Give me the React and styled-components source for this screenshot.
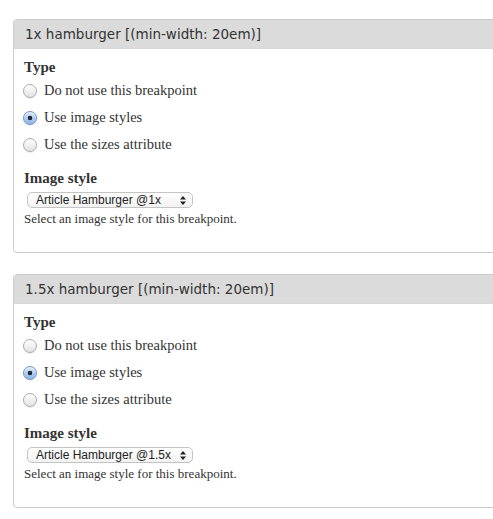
import React from "react";
import styled, { createGlobalStyle } from "styled-components";

const Global = createGlobalStyle`
  html, body { margin: 0; padding: 0; background: #fff; overflow: hidden; }
  body { font-family: Georgia, "Liberation Serif", "DejaVu Serif", serif; color: #333; }
`;

const Page = styled.div`
  padding: 19px 0 0 13px;
  display: flex;
  flex-direction: column;
  gap: 21px;
  width: 493px;
  box-sizing: border-box;
  overflow: hidden;
`;

const Panel = styled.section`
  border: 1px solid #cccccc;
  border-radius: 4px;
  width: 500px;
  flex: none;
  height: 232px;
  overflow: hidden;
  box-sizing: content-box;
`;

const Header = styled.div`
  background: #dbdbdb;
  height: 28px;
  display: flex;
  align-items: center;
  padding-left: 11px;
  font-family: "DejaVu Sans", "Liberation Sans", sans-serif;
  font-size: 13.5px;
  color: #333;
  border-bottom: 1px solid #d6d6d6;
`;

const Body = styled.div`
  padding: 10px 0 0 9px;
  display: flex;
  flex-direction: column;
`;

const Label = styled.div`
  font-weight: bold;
  font-size: 15px;
  line-height: 17px;
  color: #333;
  padding-left: 1px;
  margin-top: ${(p) => p.mt || 0}px;
  margin-bottom: ${(p) => p.mb || 0}px;
`;

const Option = styled.label`
  display: flex;
  align-items: center;
  gap: 7px;
  height: 27px;
  font-size: 14.5px;
  color: #333;
`;

const Radio = styled.span`
  width: 14px;
  height: 14px;
  border-radius: 50%;
  box-sizing: border-box;
  border: 1px solid ${(p) => (p.checked ? "#7394c0" : "#acacac")};
  background: ${(p) =>
    p.checked
      ? "radial-gradient(circle at 50% 50%, #1d2a3a 0 2px, transparent 2.6px), linear-gradient(#d8e8fc, #8db3e7)"
      : "linear-gradient(#ffffff, #e2e2e2)"};
  box-shadow: inset 0 1px 1px rgba(255,255,255,0.7), 0 1px 1px rgba(0,0,0,0.08);
  flex: none;
`;

const SelectBox = styled.div`
  margin: 5px 0 0 4px;
  width: ${(p) => p.w}px;
  height: 16px;
  box-sizing: border-box;
  border: 1px solid #c4c4c4;
  border-radius: 5px;
  background: linear-gradient(#ffffff, #f2f2f2);
  display: flex;
  align-items: center;
  justify-content: space-between;
  padding: 0 6px 0 8px;
  font-family: "Liberation Sans", "DejaVu Sans", sans-serif;
  font-size: 12px;
  white-space: nowrap;
  color: #222;
`;

const Arrows = styled.svg`
  width: 6px;
  height: 9px;
  flex: none;
`;

const Help = styled.div`
  font-size: 13px;
  line-height: 15px;
  margin-top: 3px;
  padding-left: 1px;
  color: #333;
`;

function Section({ title, style, selectW }) {
  return (
    <Panel>
      <Header>{title}</Header>
      <Body>
        <Label mb={1}>Type</Label>
        <Option><Radio />Do not use this breakpoint</Option>
        <Option><Radio checked />Use image styles</Option>
        <Option><Radio />Use the sizes attribute</Option>
        <Label mt={12}>Image style</Label>
        <SelectBox w={selectW}>
          <span>{style}</span>
          <Arrows viewBox="0 0 6 9">
            <path d="M3 0 L6 3.5 L0 3.5 Z M0 5.5 L6 5.5 L3 9 Z" fill="#222" />
          </Arrows>
        </SelectBox>
        <Help>Select an image style for this breakpoint.</Help>
      </Body>
    </Panel>
  );
}

export default function App() {
  return (
    <>
      <Global />
      <Page>
        <Section title="1x hamburger [(min-width: 20em)]" style="Article Hamburger @1x" selectW={166} />
        <Section title="1.5x hamburger [(min-width: 20em)]" style="Article Hamburger @1.5x" selectW={166} />
      </Page>
    </>
  );
}
